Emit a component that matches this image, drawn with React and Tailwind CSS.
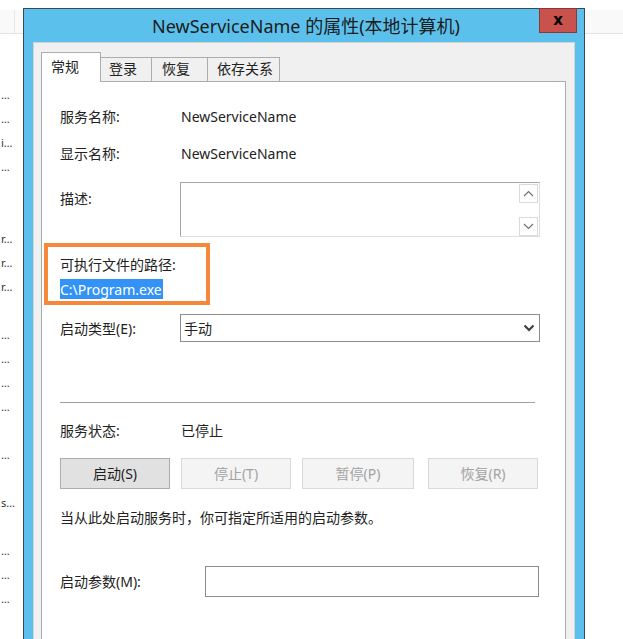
import React from 'react';

const font = "font-['Noto_Sans','Noto_Sans_CJK_SC',sans-serif]";

// left-strip fragments of the services list behind the dialog
const bgRows = ['…', '…', 'i…', '…', '', '', 'r…', 'r…', 'r…', '', '…', '…', '…', '…', '', '…', '', 's…', '', '…', '…', '…'];

const Row = ({ label, value, labelW = 'w-[121px]', className = '' }) => (
  <div className={`flex items-center h-5 ${className}`}>
    <div className={`${labelW} shrink-0`}>{label}</div>
    <div>{value}</div>
  </div>
);

const Btn = ({ children, disabled, className = '' }) => (
  <div
    className={`h-[31px] flex items-center justify-center border ${
      disabled
        ? 'bg-[#f4f4f4] border-[#d9d9d9] text-[#a3a3a3]'
        : 'bg-[#e1e1e1] border-[#adadad] text-[#1e1e1e]'
    } ${className}`}
  >
    {children}
  </div>
);

const Chevron = ({ up, className = '' }) => (
  <svg width="11" height="7" viewBox="0 0 11 7" className={className}>
    <path
      d={up ? 'M1 6 L5.5 1.5 L10 6' : 'M1 1 L5.5 5.5 L10 1'}
      fill="none"
      stroke="currentColor"
      strokeWidth="1.2"
    />
  </svg>
);

export default function App() {
  return (
    <div className={`relative w-[623px] h-[639px] overflow-hidden bg-white ${font}`}>
      {/* window behind: header strip + list column */}
      <div className="h-[10px]" />
      <div className="h-[24px] bg-[#f9f9f9] border-b border-[#e3e3e3] flex">
        <div className="w-[15px] border-r border-[#e6e6e6]" />
      </div>
      <div className="flex flex-col pt-[48px] w-[22px]">
        {bgRows.map((t, i) => (
          <div key={i} className="h-[24px] flex items-center text-[11px] text-[#333] leading-none pl-[1px]">
            {t}
          </div>
        ))}
      </div>

      {/* dialog window */}
      <div className="absolute left-[23px] top-[8px] w-[562px] h-[660px] bg-[#5bc1ec] border border-[#3a4a55] flex flex-col">
        {/* title bar */}
        <div className="relative h-[33px] shrink-0 flex items-center justify-center">
          <span className="text-[18px] leading-[22px] text-[#1b1b1b] pl-[4px]">NewServiceName 的属性(本地计算机)</span>
          <div className="absolute right-[7px] top-[-1px] w-[38px] h-[25px] bg-[#c9524d] border border-[#8a3a36] flex items-center justify-center">
            <span className="text-[15px] font-bold text-black leading-none font-['DejaVu_Sans',sans-serif]">x</span>
          </div>
        </div>

        {/* client area */}
        <div className="flex-1 mx-[9px] bg-[#f0f0f0] border-l border-t border-r border-[#d4d4d4] pl-[7px] pr-[8px] pt-[10px] text-[14px] text-[#222]">
          {/* tabs */}
          <div className="flex items-end h-[29px] relative z-10">
            <div className="w-[60px] h-[30px] bg-white border border-b-0 border-[#acacac] pl-[9px] flex items-center pb-[3px]">常规</div>
            <div className="w-[51px] h-[25px] bg-[#f0f0f0] border border-l-0 border-[#acacac] pl-[8px] flex items-center pb-[2px]">登录</div>
            <div className="w-[56px] h-[25px] bg-[#f0f0f0] border border-l-0 border-[#acacac] pl-[10px] flex items-center pb-[2px]">恢复</div>
            <div className="w-[72px] h-[25px] bg-[#f0f0f0] border border-l-0 border-[#acacac] pl-[9px] flex items-center pb-[2px]">依存关系</div>
          </div>

          {/* tab page */}
          <div className="relative -mt-[1px] h-[600px] bg-white border border-[#acacac] pl-[18px] pt-[24px]">
            <Row label="服务名称:" value="NewServiceName" />
            <Row label="显示名称:" value="NewServiceName" className="mt-[17px]" />

            <div className="flex mt-[19px]">
              <div className="w-[120px] shrink-0 pt-[6px]">描述:</div>
              <div className="w-[360px] h-[55px] border border-[#a6a6a6] border-r-[#dedede] border-b-[#dedede] flex justify-end pt-[1px] pr-[1px]">
                <div className="w-[19px] flex flex-col text-[#707070]">
                  <div className="h-[19px] border border-[#dadada] flex items-center justify-center">
                    <Chevron up />
                  </div>
                  <div className="h-[14px]" />
                  <div className="h-[19px] border border-[#dadada] flex items-center justify-center">
                    <Chevron />
                  </div>
                </div>
              </div>
            </div>

            <div className="mt-[17px] h-5 flex items-center">可执行文件的路径:</div>
            <div className="mt-[5px] h-5 flex items-center">
              <span className="bg-[#3392f5] text-white h-5 flex items-center pr-[1px]">C:\Program.exe</span>
            </div>

            <div className="flex items-center mt-[15px]">
              <div className="w-[120px] shrink-0">启动类型(E):</div>
              <div className="w-[360px] h-[28px] border border-[#8c8c8c] flex items-center justify-between pl-[3px] pr-[4px]">
                <span>手动</span>
                <svg width="12" height="8" viewBox="0 0 12 8" className="text-[#404040]">
                  <path d="M1.5 1.5 L6 6 L10.5 1.5" fill="none" stroke="currentColor" strokeWidth="2.2" />
                </svg>
              </div>
            </div>

            <div className="mt-[60px] w-[475px] border-t border-[#a0a0a0]" />

            <Row label="服务状态:" value="已停止" className="mt-[17px]" />

            <div className="flex mt-[18px]">
              <Btn className="w-[110px]">启动(S)</Btn>
              <Btn disabled className="w-[110px] ml-[11px]">停止(T)</Btn>
              <Btn disabled className="w-[112px] ml-[11px]">暂停(P)</Btn>
              <Btn disabled className="w-[110px] ml-[14px]">恢复(R)</Btn>
            </div>

            <div className="mt-[18px] h-5 flex items-center">当从此处启动服务时，你可指定所适用的启动参数。</div>

            <div className="flex items-center mt-[39px]">
              <div className="w-[145px] shrink-0">启动参数(M):</div>
              <div className="w-[334px] h-[31px] border border-[#8c8c8c]" />
            </div>

            {/* highlight annotation */}
            <div className="absolute left-[2px] top-[161px] w-[166px] h-[62px] border-[4px] border-[#f5883a]" />
          </div>
        </div>
      </div>
    </div>
  );
}
